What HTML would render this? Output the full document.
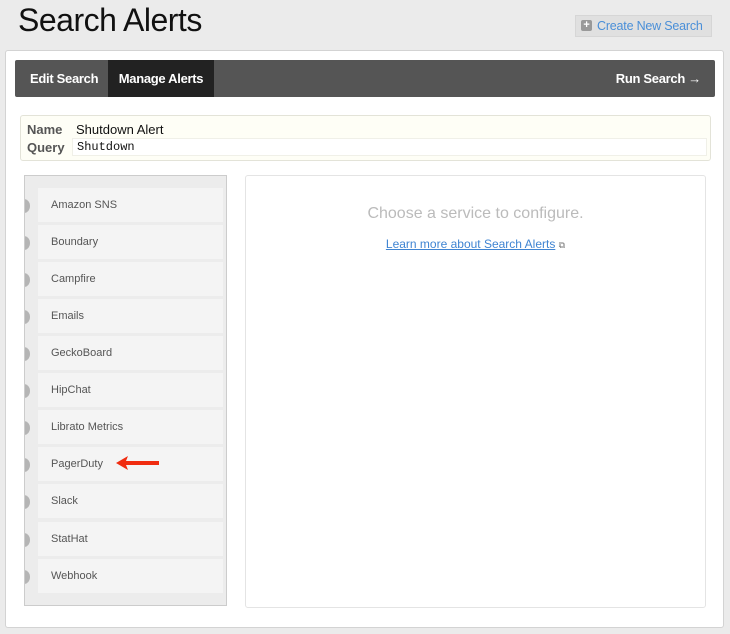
<!DOCTYPE html>
<html><head><style>
*{margin:0;padding:0;box-sizing:border-box}
body{width:730px;height:634px;background:#ebebeb;font-family:"Liberation Sans",sans-serif;position:relative;overflow:hidden}
.abs{position:absolute}
h1{position:absolute;left:18px;top:2px;font-size:32px;font-weight:normal;color:#111;letter-spacing:-0.5px}
.cns{left:575px;top:15px;width:137px;height:22px;background:#e0e0e0;border:1px solid #d6d6d6;color:#4a8fd8;font-size:12.5px;line-height:20px;padding-left:21px;white-space:nowrap;letter-spacing:-0.2px}
.cns i{position:absolute;left:5px;top:4px;width:11px;height:11px;background:#999;border-radius:2px;color:#fff;font-style:normal;font-size:11px;line-height:10px;text-align:center;font-weight:bold}
.main{left:5px;top:50px;width:719px;height:578px;background:#fff;border:1px solid #d3d3d3;border-radius:3px}
.nav{left:15px;top:60px;width:700px;height:37px;background:#555;border-radius:2px;color:#fff;font-weight:bold;font-size:13px;line-height:37px;letter-spacing:-0.3px}
.nav span{position:absolute;top:0}
.act{left:93px;width:106px;background:#222;text-align:center}
.nb{left:20px;top:115px;width:691px;height:46px;background:#fefef6;border:1px solid #e3e3d8;border-radius:3px;font-size:13px}
.nb b{position:absolute;left:6px;color:#555}
.nb span{position:absolute;left:55px;color:#111}
.list{left:24px;top:175px;width:203px;height:431px;background:#ececec;border:1px solid #ccc;overflow:hidden}
.it{position:absolute;left:13px;width:185px;height:34px;background:#f4f4f4;font-size:11px;color:#555;line-height:34px;padding-left:13px}
.dot{position:absolute;left:-20px;top:11px;width:12px;height:14px;border-radius:50%;background:#b5b5b5}
.right{left:245px;top:175px;width:461px;height:433px;background:#fff;border:1px solid #e4e4e4;border-radius:3px}
</style></head><body>
<h1>Search Alerts</h1>
<div class="abs cns"><i>+</i>Create New Search</div>
<div class="abs main"></div>
<div class="abs nav"><span style="left:15px">Edit Search</span><span class="act">Manage Alerts</span><span style="right:14px">Run Search →</span></div>
<div class="abs nb"><b style="top:6px">Name</b><span style="top:6px">Shutdown Alert</span><b style="top:24px">Query</b><span style="top:22px;left:51px;right:3px;height:18px;background:#fff;border:1px solid #f0f0e8;padding-left:4px;font-family:'Liberation Mono',monospace;font-size:12px;line-height:16px">Shutdown</span></div>
<div class="abs list">
<div class="it" style="top:12px"><div class="dot"></div>Amazon SNS</div>
<div class="it" style="top:49px"><div class="dot"></div>Boundary</div>
<div class="it" style="top:86px"><div class="dot"></div>Campfire</div>
<div class="it" style="top:123px"><div class="dot"></div>Emails</div>
<div class="it" style="top:160px"><div class="dot"></div>GeckoBoard</div>
<div class="it" style="top:197px"><div class="dot"></div>HipChat</div>
<div class="it" style="top:234px"><div class="dot"></div>Librato Metrics</div>
<div class="it" style="top:271px"><div class="dot"></div>PagerDuty</div>
<div class="it" style="top:308px"><div class="dot"></div>Slack</div>
<div class="it" style="top:346px"><div class="dot"></div>StatHat</div>
<div class="it" style="top:383px"><div class="dot"></div>Webhook</div>
</div>
<svg class="abs" style="left:114px;top:455px" width="48" height="16"><path d="M2 8 L14 1 L12 6 L45 6 L45 10 L12 10 L14 15 Z" fill="#f02c10"/></svg>
<div class="abs right">
<div style="position:absolute;top:29px;width:100%;text-align:center;font-size:16px;color:#bbb">Choose a service to configure.</div>
<div style="position:absolute;top:61px;width:100%;text-align:center;font-size:12px;color:#3f84d2"><u>Learn more about Search Alerts</u> <span style="font-size:9px;color:#777">⧉</span></div>
</div>
</body></html>
